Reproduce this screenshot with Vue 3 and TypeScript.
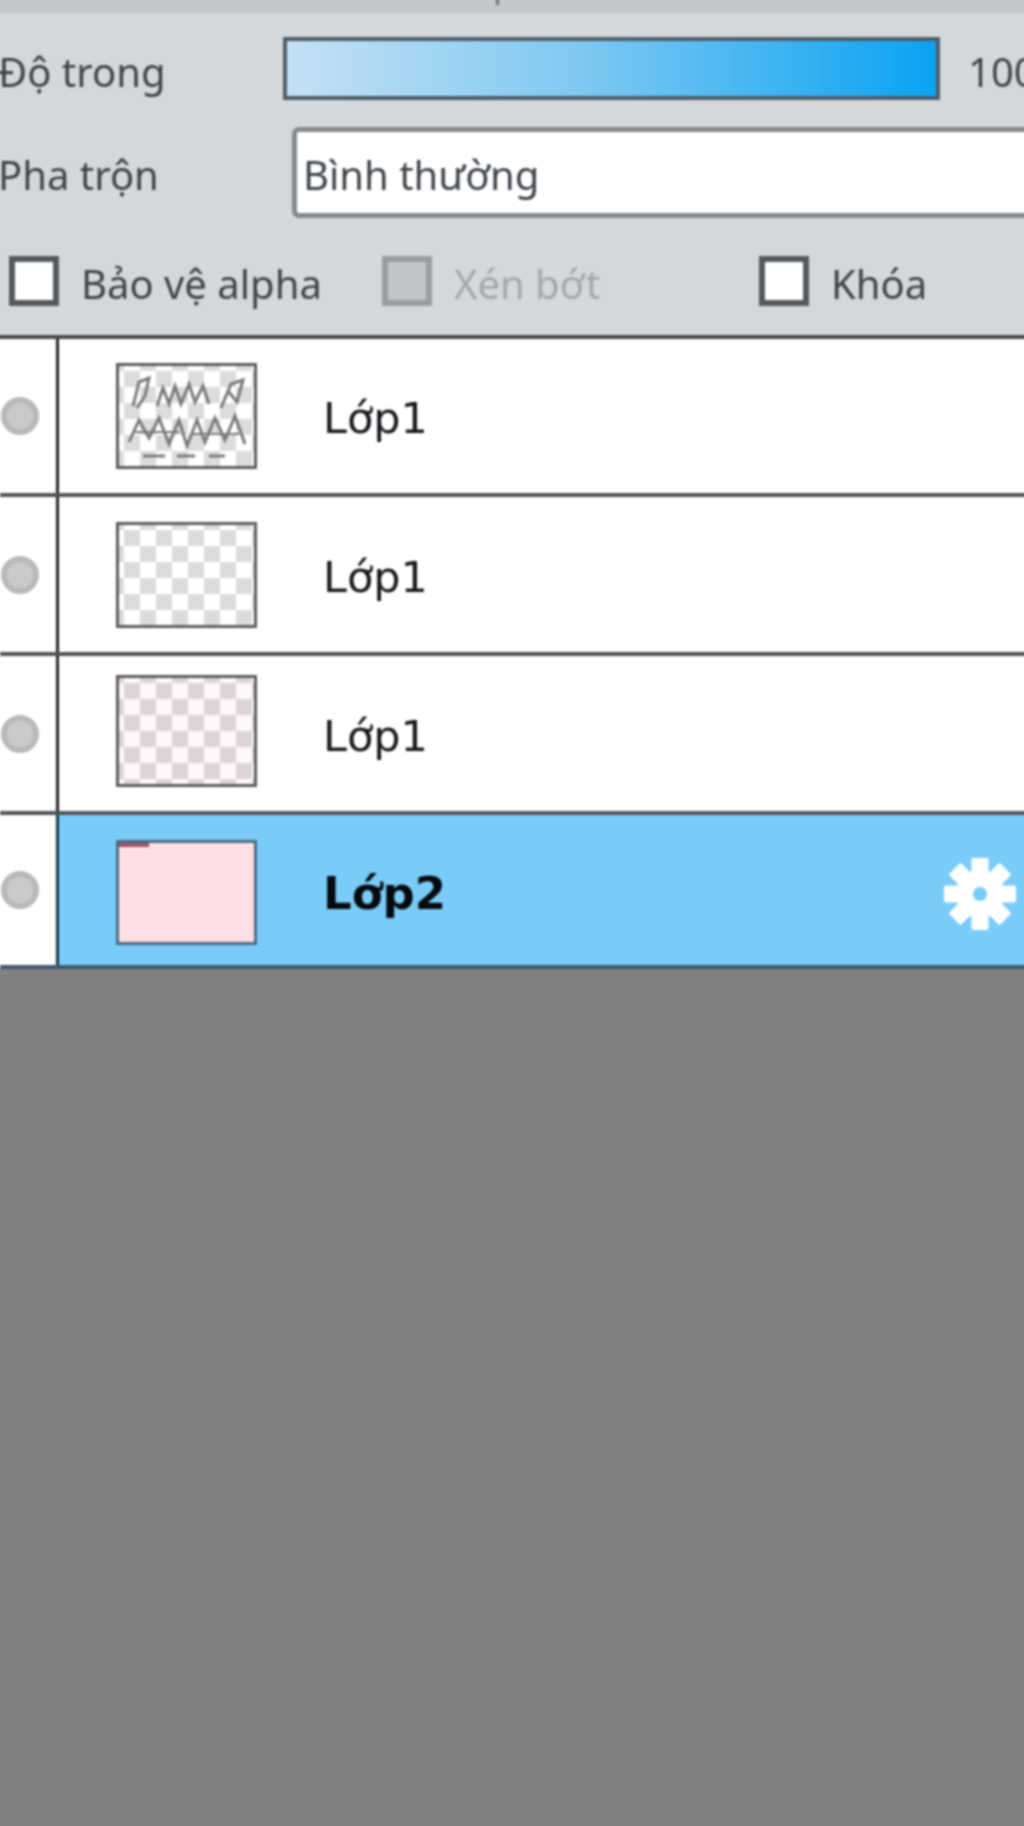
<script setup lang="ts">
interface LayerRow {
  name: string
  rowHeight: number
  thumbHeight: number
  thumbShift: number
  kind: 'sketch' | 'blank' | 'tinted' | 'pink'
  active?: boolean
}

const layers: LayerRow[] = [
  { name: 'Lớp1', rowHeight: 154, thumbHeight: 106, thumbShift: 0, kind: 'sketch' },
  { name: 'Lớp1', rowHeight: 155, thumbHeight: 106, thumbShift: 0, kind: 'blank' },
  { name: 'Lớp1', rowHeight: 155, thumbHeight: 112, thumbShift: -6, kind: 'tinted' },
  { name: 'Lớp2', rowHeight: 150, thumbHeight: 105, thumbShift: 5, kind: 'pink', active: true }
]

const gearTeeth = [0, 45, 90, 135]
</script>

<template>
  <div class="viewport">
    <div class="screen">
      <div class="top-strip"><span class="top-mark"></span></div>
      <section class="options">
        <div class="option-row opacity-row">
          <span class="label">Độ trong</span>
          <div class="slider"></div>
          <span class="percent">100%</span>
        </div>
        <div class="option-row blend-row">
          <span class="label">Pha trộn</span>
          <div class="select">Bình thường</div>
        </div>
        <div class="checks">
          <div class="check alpha"><span class="box"></span><span class="check-text">Bảo vệ alpha</span></div>
          <div class="check clip disabled"><span class="box"></span><span class="check-text">Xén bớt</span></div>
          <div class="check"><span class="box"></span><span class="check-text">Khóa</span></div>
        </div>
      </section>
      <ul class="layers">
        <li
          v-for="(layer, i) in layers"
          :key="i"
          class="layer"
          :class="{ active: layer.active }"
          :style="{ height: layer.rowHeight + 'px' }"
        >
          <div class="eye"><span class="dot"></span></div>
          <div class="layer-main">
            <div
              class="thumb"
              :class="layer.kind"
              :style="{ height: layer.thumbHeight + 'px', marginTop: layer.thumbShift + 'px' }"
            >
              <svg v-if="layer.kind === 'sketch'" class="scribble" viewBox="0 0 135 100" fill="none" stroke="#7a7a7a" stroke-width="3">
                <path d="M14 40 L20 16 L30 12 L26 30 L18 42" />
                <path d="M38 40 L44 22 L50 38 L56 20 L62 38 L70 18 L76 36 L84 20 L90 38" />
                <path d="M102 42 L112 18 L124 14 L118 36 L110 26" />
                <path d="M10 76 L20 54 L30 72 L40 52 L50 78 L60 54 L68 80 L78 54 L86 76 L96 52 L106 74 L116 50 L126 78" />
                <path d="M16 66 H60 M72 68 H120" stroke-width="2" />
                <path d="M24 90 H46 M58 90 H76 M90 90 H106" />
              </svg>
              <span v-if="layer.kind === 'pink'" class="pink-mark"></span>
            </div>
            <span class="layer-name">{{ layer.name }}</span>
            <svg v-if="layer.active" class="gear" viewBox="0 0 72 72">
              <circle cx="36" cy="36" r="24" fill="#fff" />
              <rect
                v-for="deg in gearTeeth"
                :key="deg"
                x="27.5"
                y="0"
                width="17"
                height="72"
                rx="2"
                fill="#fff"
                :transform="`rotate(${deg} 36 36)`"
              />
              <circle cx="36" cy="36" r="7" fill="#7accf8" />
            </svg>
          </div>
        </li>
      </ul>
      <div class="fill"></div>
    </div>
  </div>
</template>

<style>
html,
body {
  margin: 0;
  background: #808080;
}
</style>

<style scoped>
.viewport {
  width: 1024px;
  height: 1826px;
  overflow: hidden;
}

.screen {
  width: 1036px;
  height: 1838px;
  margin: -6px;
  padding: 6px 12px 6px 6px;
  box-sizing: border-box;
  display: flex;
  flex-direction: column;
  background: #808080;
  font-family: "Noto Sans", "Open Sans", sans-serif;
  filter: blur(1.1px);
}

.top-strip {
  flex: none;
  height: 13px;
  margin: -6px -12px 0 -6px;
  padding-top: 6px;
  background: #c3c7c9;
  position: relative;
}

.top-mark {
  position: absolute;
  left: 502px;
  top: 0;
  width: 3px;
  height: 11px;
  background: #6f7376;
}

.options {
  flex: none;
  height: 326px;
  margin: 0 -12px 0 -6px;
  padding-left: 6px;
  box-sizing: border-box;
  background: #d4d8db;
  color: #3f4449;
  font-size: 40px;
  line-height: 54px;
  display: flex;
  flex-direction: column;
  border-bottom: 4px solid #474b4e;
}

.option-row {
  display: flex;
  align-items: center;
  white-space: nowrap;
}

.opacity-row {
  height: 63px;
  margin-top: 24px;
}

.blend-row {
  height: 91px;
  margin-top: 27px;
}

.label {
  flex: none;
  margin: 6px 0 0 -2px;
}

.opacity-row .label {
  width: 285px;
}

.blend-row .label {
  width: 294px;
  margin-top: 5px;
}

.slider {
  flex: none;
  width: 649px;
  height: 55px;
  border: 4px solid #4f5d68;
  background: linear-gradient(to right, #c4e1f4, #7fc9f2 45%, #0aa3f2);
}

.percent {
  margin: 6px 0 0 28px;
}

.select {
  flex: 1;
  height: 81px;
  margin-right: -20px;
  padding-left: 6px;
  line-height: 86px;
  border: 5px solid #85898c;
  border-radius: 7px 0 0 7px;
  background: #fff;
}

.checks {
  display: flex;
  margin-top: 38px;
  height: 50px;
  align-items: center;
  white-space: nowrap;
}

.check {
  display: flex;
  align-items: center;
  gap: 22px;
}

.check-text {
  margin-top: 5px;
}

.alpha {
  margin-left: 9px;
  width: 373px;
}

.clip {
  width: 377px;
}

.box {
  width: 50px;
  height: 50px;
  box-sizing: border-box;
  border: 6px solid #55595c;
  background: #fff;
}

.disabled {
  color: #a4a8ac;
}

.disabled .box {
  border-color: #9a9ea1;
  background: #c1c5c8;
}

.layers {
  flex: none;
  list-style: none;
  margin: 0 -12px 0 -6px;
  padding: 0 0 0 6px;
  background: #fff;
}

.layer {
  display: flex;
  box-sizing: content-box;
  border-bottom: 4px solid #505356;
}

.eye {
  flex: none;
  width: 56px;
  display: flex;
  align-items: center;
  border-right: 3px solid #212427;
}

.dot {
  width: 38px;
  height: 38px;
  margin-left: 1px;
  border-radius: 50%;
  background: #cacaca;
  border: 6px solid #b9b9b9;
  box-sizing: border-box;
}

.layer-main {
  flex: 1;
  min-width: 0;
  display: flex;
  align-items: center;
  padding-left: 57px;
  color: #15171a;
  font-family: "DejaVu Sans", "Noto Sans", sans-serif;
  font-size: 43px;
}

.thumb {
  flex: none;
  position: relative;
  width: 141px;
  box-sizing: border-box;
  margin-right: 66px;
  border: 3px solid #5c5c5c;
  background-color: #fff;
  background-image: conic-gradient(#dcdcdc 25%, #fff 0 50%, #dcdcdc 0 75%, #fff 0);
  background-size: 32px 32px;
  background-position: 5px -11px;
}

.tinted {
  background-image: conic-gradient(#dcd4d6 25%, #fff8f8 0 50%, #dcd4d6 0 75%, #fff8f8 0);
}

.pink {
  background: #fde0e4;
  border-color: #4c6b85;
}

.pink-mark {
  position: absolute;
  left: 0;
  top: 0;
  width: 30px;
  height: 4px;
  background: #a0526a;
}

.scribble {
  position: absolute;
  left: 0;
  top: 0;
  width: 100%;
  height: 100%;
}

.layer-name {
  flex: 1;
  margin-top: 4px;
}

.active .layer-main {
  background: #7accf8;
  font-weight: 700;
  font-size: 45px;
  color: #060a0e;
}

.active .layer-name {
  margin-top: 6px;
}

.active {
  border-bottom-color: #3f5a6c;
}

.active .eye {
  border-right-color: #16344a;
}

.gear {
  flex: none;
  width: 72px;
  height: 72px;
  margin: 7px 14px 0 0;
}

.fill {
  flex: 1;
}
</style>
